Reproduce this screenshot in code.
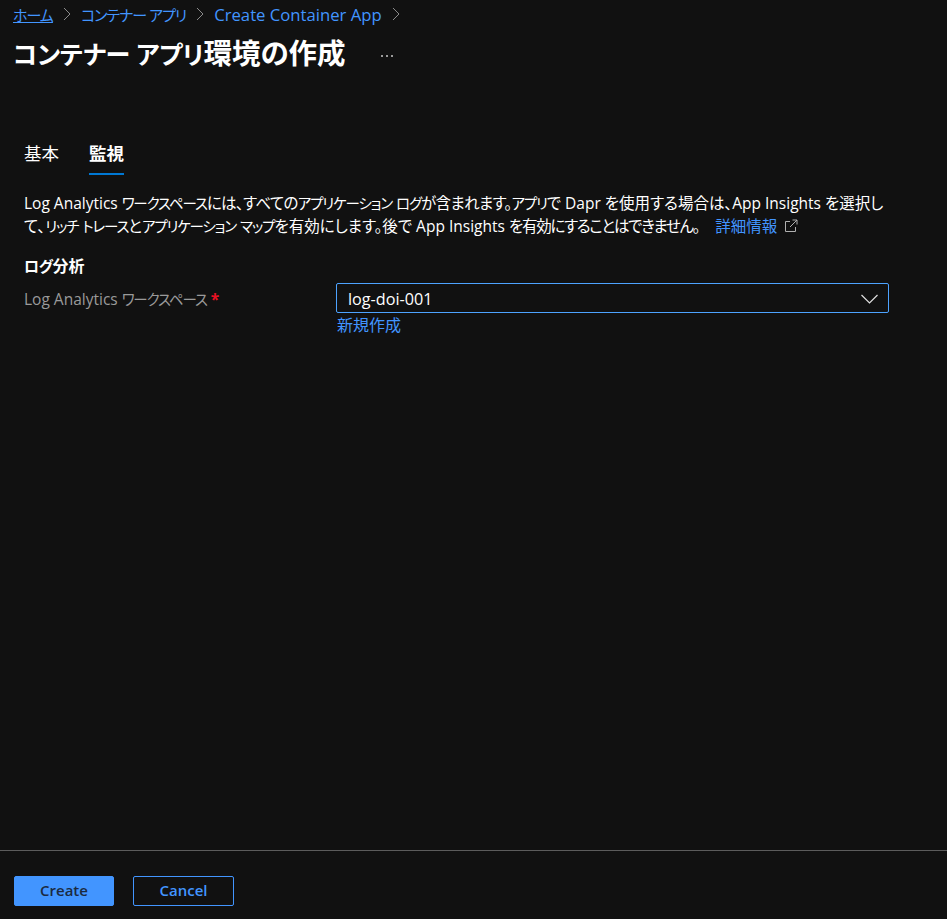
<script lang="ts">
    // Only the second tab is active on this step
    let tab = 'monitor';
</script>

<style>
    :global(body) {
        background-color: #111111;
    }

    .page {
        height: 919px;
        display: flex;
        flex-direction: column;
        background-color: #111111;
        color: #ffffff;
        font-family: "Open Sans", "Noto Sans CJK JP", sans-serif;
        font-size: 15.5px;
        font-feature-settings: "palt";
        overflow: hidden;
    }

    /* Katakana runs are set narrower, the way the original UI font draws them */
    .k {
        font-size: 14.5px;
        letter-spacing: -1.15px;
    }

    /* Same for the hiragana runs in the paragraph */
    .n {
        letter-spacing: -0.65px;
    }

    .h {
        letter-spacing: -1.3px;
    }

    .breadcrumb {
        display: flex;
        align-items: center;
        gap: 10px;
        padding: 3px 0 0 13px;
        height: 22px;
        font-size: 15px;
        letter-spacing: -1px;
    }

    .breadcrumb .latin {
        font-size: 16.7px;
        letter-spacing: 0;
    }

    a {
        color: #4295ff;
        text-decoration: none;
    }

    .breadcrumb a:first-child {
        text-decoration: underline;
    }

    .title {
        display: flex;
        align-items: center;
        padding-left: 13px;
        margin-top: 4px;
        height: 48px;
    }

    h1 {
        margin: 0;
        font-size: 28.5px;
        font-weight: 700;
        line-height: 48px;
    }

    h1 .k {
        font-size: 25px;
        letter-spacing: -0.2px;
    }

    .more {
        margin-left: 34px;
        display: flex;
        padding-top: 5px;
    }

    .tabs {
        display: flex;
        gap: 30px;
        margin: 63px 0 0 24px;
    }

    .tabs button {
        background: none;
        border: none;
        padding: 0 0 7px;
        color: #ffffff;
        font: inherit;
        font-size: 17.5px;
        line-height: 26px;
        border-bottom: 2px solid transparent;
    }

    .tabs button.active {
        font-weight: 700;
        border-bottom-color: #0078d4;
    }

    .content {
        padding: 0 58px 0 24px;
        flex: 1;
    }

    .intro {
        margin: 17px 0 0;
        line-height: 22px;
    }

    .intro a {
        margin-left: 12px;
    }

    .external {
        margin-left: 3px;
        vertical-align: -1px;
    }

    h2 {
        margin: 16px 0 0;
        font-size: 16px;
        font-weight: 700;
        line-height: 24px;
    }

    h2 .k {
        font-size: 15px;
        letter-spacing: -0.5px;
    }

    .field {
        display: grid;
        grid-template-columns: 312px 1fr;
        margin-top: 5px;
    }

    .field label {
        color: #9a9a9a;
        line-height: 30px;
        padding-top: 1px;
    }

    .required {
        color: #e81123;
        font-weight: 700;
    }

    .select {
        box-sizing: border-box;
        height: 30px;
        border: 1px solid #4da3ff;
        border-radius: 2px;
        display: flex;
        align-items: center;
        justify-content: space-between;
        padding: 1px 10px 0 11px;
        font-size: 16.2px;
    }

    .new {
        display: block;
        margin-left: 1px;
        font-size: 16px;
        line-height: 24px;
    }

    footer {
        border-top: 1px solid #5c5c5c;
        height: 69px;
        display: flex;
        align-items: flex-start;
        gap: 19px;
        padding: 25px 0 0 14px;
        box-sizing: border-box;
    }

    footer button {
        width: 100px;
        height: 30px;
        border-radius: 2px;
        font-family: inherit;
        font-size: 15px;
        font-weight: 600;
        padding: 0 0 2px;
    }

    .create {
        background-color: #4295ff;
        border: 1px solid #4295ff;
        color: #1b2a40;
    }

    .cancel {
        width: 101px;
        background: none;
        border: 1px solid #4295ff;
        color: #4295ff;
    }
</style>

<div class="page">
    <nav class="breadcrumb">
        <a href="#home">ホーム</a>
        <svg width="8" height="14" viewBox="0 0 8 14" fill="none" stroke="#8a8a8a" stroke-width="1"><path d="M1 1l6 6-6 6" /></svg>
        <a href="#apps">コンテナー アプリ</a>
        <svg width="8" height="14" viewBox="0 0 8 14" fill="none" stroke="#8a8a8a" stroke-width="1"><path d="M1 1l6 6-6 6" /></svg>
        <a class="latin" href="#create">Create Container App</a>
        <svg width="8" height="14" viewBox="0 0 8 14" fill="none" stroke="#8a8a8a" stroke-width="1"><path d="M1 1l6 6-6 6" /></svg>
    </nav>

    <div class="title">
        <h1><span class="k">コンテナー アプリ</span>環境の作成</h1>
        <span class="more">
            <svg width="14" height="4" viewBox="0 0 14 4" fill="#c8c8c8"><circle cx="2" cy="2" r="1" /><circle cx="7" cy="2" r="1" /><circle cx="12" cy="2" r="1" /></svg>
        </span>
    </div>

    <div class="tabs">
        <button class:active={tab === 'basic'}>基本</button>
        <button class:active={tab === 'monitor'}>監視</button>
    </div>

    <div class="content">
        <p class="intro">
            Log Analytics <span class="k">ワークスペース</span><span class="n">には、すべての</span><span class="k">アプリケーション</span> <span class="k">ログ</span><span class="n">が含まれます。</span><span class="k">アプリ</span>で Dapr を使用する場合は、App Insights を選択し<br />て、<span class="k">リッチ</span> <span class="k">トレース</span>と<span class="k">アプリケーション</span> <span class="k">マップ</span>を有効にします。後で App Insights <span class="h">を有効にすることはできません。</span>
            <a href="#more">詳細情報</a>
            <svg class="external" width="14" height="14" viewBox="0 0 14 14" fill="none" stroke="#b0b0b0" stroke-width="1"><path d="M6 2.5H1.5v10h10V8M8.5 1h4.5v4.5M13 1L6 8" /></svg>
        </p>

        <h2><span class="k">ログ</span>分析</h2>

        <div class="field">
            <label for="workspace">Log Analytics <span class="k">ワークスペース</span> <span class="required">*</span></label>
            <div>
                <div class="select" id="workspace">
                    <span>log-doi-001</span>
                    <svg width="17" height="10" viewBox="0 0 17 10" fill="none" stroke="#e0e0e0" stroke-width="1.2"><path d="M0.5 1l8 8 8-8" /></svg>
                </div>
                <a class="new" href="#new">新規作成</a>
            </div>
        </div>
    </div>

    <footer>
        <button class="create">Create</button>
        <button class="cancel">Cancel</button>
    </footer>
</div>
